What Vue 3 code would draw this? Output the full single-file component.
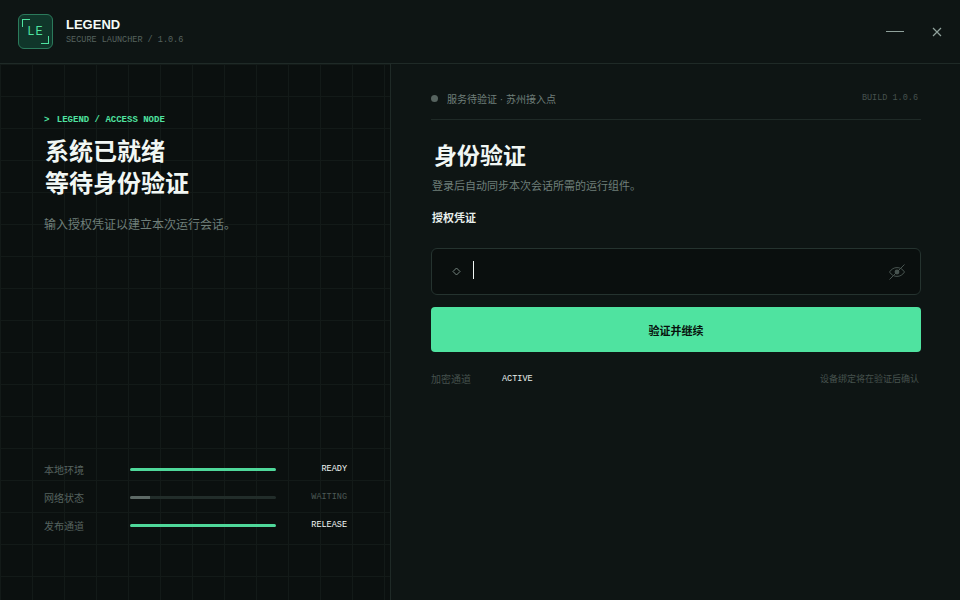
<template>
  <div class="launcher">
    <header class="titlebar">
      <div class="brand">
        <div class="logo">
          <span class="logo-corner logo-corner--tl"></span>
          <span class="logo-text">LE</span>
          <span class="logo-corner logo-corner--br"></span>
        </div>
        <div class="brand-copy">
          <strong>LEGEND</strong>
          <span>SECURE LAUNCHER / 1.0.6</span>
        </div>
      </div>
      <div class="window-actions">
        <span class="win-min"></span>
        <svg class="win-close" width="10" height="10" viewBox="0 0 10 10">
          <path d="M1 1l8 8M9 1l-8 8" stroke="#8fa19b" stroke-width="1.2" fill="none" />
        </svg>
      </div>
    </header>

    <main class="body">
      <section class="side">
        <div class="side-top">
          <p class="kicker"><span class="kicker-mark">&gt;</span> LEGEND / ACCESS NODE</p>
          <h1>系统已就绪<br />等待身份验证</h1>
          <p class="side-copy">输入授权凭证以建立本次运行会话。</p>
        </div>
        <div class="checks">
          <div v-for="row in checks" :key="row.label" class="check">
            <span class="check-label">{{ row.label }}</span>
            <span class="check-track">
              <span :class="['check-fill', { 'check-fill--idle': !row.on }]" :style="{ width: row.pct + '%' }"></span>
            </span>
            <span :class="['check-value', { 'check-value--idle': !row.on }]">{{ row.value }}</span>
          </div>
        </div>
      </section>

      <section class="panel">
        <div class="panel-status">
          <span class="status-dot"></span>
          <span class="status-text">服务待验证 · 苏州接入点</span>
          <span class="status-build">BUILD 1.0.6</span>
        </div>

        <h2>身份验证</h2>
        <p class="panel-copy">登录后自动同步本次会话所需的运行组件。</p>
        <label class="field-label">授权凭证</label>

        <div class="field">
          <svg class="field-icon" width="9" height="9" viewBox="0 0 9 9">
            <path d="M4.5 1L8 4.5 4.5 8 1 4.5z" stroke="#7f8f89" stroke-width="0.9" fill="none" />
          </svg>
          <span class="caret"></span>
          <svg class="field-eye" width="18" height="18" viewBox="0 0 18 18" fill="none">
            <path d="M1.5 9C3.5 6 6 4.6 9 4.6S14.5 6 16.5 9c-2 3-4.5 4.4-7.5 4.4S3.5 12 1.5 9z" stroke="#47534f" stroke-width="1" />
            <circle cx="9" cy="9" r="2.4" fill="#47534f" />
            <path d="M1.5 16.5L16.5 1.5" stroke="#47534f" stroke-width="1" />
          </svg>
        </div>

        <button class="submit">验证并继续</button>

        <div class="panel-foot">
          <span class="foot-label">加密通道</span>
          <span class="foot-value">ACTIVE</span>
          <span class="foot-note">设备绑定将在验证后确认</span>
        </div>
      </section>
    </main>
  </div>
</template>

<script setup>
const checks = [
  { label: '本地环境', value: 'READY', pct: 100, on: true },
  { label: '网络状态', value: 'WAITING', pct: 14, on: false },
  { label: '发布通道', value: 'RELEASE', pct: 100, on: true },
]
</script>

<style>
html,
body {
  margin: 0;
  background: #0e1514;
}
</style>

<style scoped>
.launcher {
  display: flex;
  flex-direction: column;
  width: 960px;
  height: 600px;
  overflow: hidden;
  background: #0e1514;
  color: #eef5f1;
  font-family: "Liberation Sans", "Noto Sans CJK SC", sans-serif;
}

.titlebar {
  display: flex;
  align-items: center;
  justify-content: space-between;
  box-sizing: border-box;
  height: 64px;
  flex: none;
  padding: 0 18px;
  border-bottom: 1px solid #1f2a27;
}

.brand {
  display: flex;
  align-items: center;
  gap: 13px;
}

.logo {
  position: relative;
  display: flex;
  align-items: center;
  justify-content: center;
  box-sizing: border-box;
  width: 35px;
  height: 35px;
  border: 1px solid #2b7a5b;
  border-radius: 6px;
  background: #10362a;
}

.logo-text {
  color: #4fe3a0;
  font-family: "Liberation Mono", monospace;
  font-size: 12px;
  letter-spacing: 0.08em;
}

.logo-corner {
  position: absolute;
  width: 7px;
  height: 7px;
  border: solid #4fe3a0;
}

.logo-corner--tl {
  top: 4px;
  left: 3px;
  border-width: 1px 0 0 1px;
}

.logo-corner--br {
  right: 3px;
  bottom: 4px;
  border-width: 0 1px 1px 0;
}

.brand-copy {
  display: flex;
  flex-direction: column;
  gap: 3px;
}

.brand-copy strong {
  font-size: 13px;
  line-height: 15px;
  font-weight: 700;
  color: #f4faf7;
}

.brand-copy span {
  color: #56635f;
  font-family: "Liberation Mono", monospace;
  font-size: 8.5px;
  line-height: 11px;
}

.window-actions {
  display: flex;
  align-items: center;
  gap: 28px;
  padding-right: 0;
}

.win-min {
  width: 18px;
  height: 1px;
  background: #8fa19b;
}

.win-close {
  display: block;
}

.body {
  display: grid;
  grid-template-columns: 391px 1fr;
  flex: 1;
  min-height: 0;
}

.side {
  display: flex;
  flex-direction: column;
  justify-content: space-between;
  box-sizing: border-box;
  padding: 50px 44px 66px 44px;
  border-right: 1px solid #1f2a27;
  background-color: #0b100f;
  background-image:
    linear-gradient(#131a18 1px, transparent 1px),
    linear-gradient(90deg, #131a18 1px, transparent 1px);
  background-size: 32px 32px;
}

.kicker {
  margin: 0 0 10px;
  color: #4fe3a0;
  font-family: "Liberation Mono", monospace;
  font-size: 9px;
  line-height: 12px;
  font-weight: 700;
}

.kicker-mark {
  margin-right: 2px;
}

.side h1 {
  margin: 0 0 16px 1px;
  font-size: 24px;
  line-height: 32px;
  font-weight: 700;
  color: #f1f7f4;
}

.side-copy {
  margin: 0;
  color: #6f7f7a;
  font-size: 12px;
  line-height: 18px;
}

.checks {
  display: flex;
  flex-direction: column;
  gap: 10px;
  padding-right: 0;
}

.check {
  display: grid;
  grid-template-columns: 86px 146px 71px;
  align-items: center;
  height: 18px;
}

.check-label {
  color: #56635f;
  font-size: 10px;
}

.check-track {
  display: block;
  height: 3px;
  border-radius: 2px;
  background: #222d2a;
  overflow: hidden;
}

.check-fill {
  display: block;
  height: 100%;
  background: #4fd89a;
}

.check-fill--idle {
  background: #5e6a66;
}

.check-value {
  color: #f1f7f4;
  font-family: "Liberation Mono", monospace;
  font-size: 8.5px;
  text-align: right;
}

.check-value--idle {
  color: #4c5955;
}

.panel {
  display: flex;
  flex-direction: column;
  padding: 24px 39px 0 40px;
}

.panel-status {
  display: flex;
  align-items: center;
  height: 20px;
  padding-bottom: 11px;
  border-bottom: 1px solid #1f2a27;
}

.status-dot {
  width: 7px;
  height: 7px;
  margin-right: 9px;
  border-radius: 50%;
  background: #56635f;
}

.status-text {
  color: #6f7f7a;
  font-size: 10px;
}

.status-build {
  margin-left: auto;
  padding-right: 3px;
  color: #46524e;
  font-family: "Liberation Mono", monospace;
  font-size: 8.5px;
}

.panel h2 {
  margin: 20px 0 0 3px;
  font-size: 23px;
  line-height: 32px;
  font-weight: 700;
  color: #f1f7f4;
}

.panel-copy {
  margin: 6px 0 0 1px;
  color: #6f7f7a;
  font-size: 11px;
  line-height: 16px;
}

.field-label {
  margin: 16px 0 0 1px;
  font-size: 11px;
  line-height: 16px;
  font-weight: 700;
  color: #e8efec;
}

.field {
  display: flex;
  align-items: center;
  box-sizing: border-box;
  height: 47px;
  margin-top: 22px;
  padding: 0 14px 0 20px;
  border: 1px solid #25332f;
  border-radius: 6px;
  background: #0a0f0e;
}

.caret {
  width: 1px;
  height: 18px;
  margin: -4px 0 0 12px;
  background: #f1f7f4;
}

.field-eye {
  margin-left: auto;
}

.submit {
  height: 45px;
  margin-top: 12px;
  padding: 0;
  border: 0;
  border-radius: 4px;
  background: #4fe3a0;
  color: #07120d;
  font-family: inherit;
  font-size: 11px;
  font-weight: 700;
}

.panel-foot {
  display: flex;
  align-items: center;
  margin-top: 19px;
}

.foot-label {
  width: 71px;
  color: #45514d;
  font-size: 10px;
}

.foot-value {
  color: #e8efec;
  font-family: "Liberation Mono", monospace;
  font-size: 8.5px;
}

.foot-note {
  margin-left: auto;
  padding-right: 2px;
  color: #46524e;
  font-size: 9px;
}
</style>
